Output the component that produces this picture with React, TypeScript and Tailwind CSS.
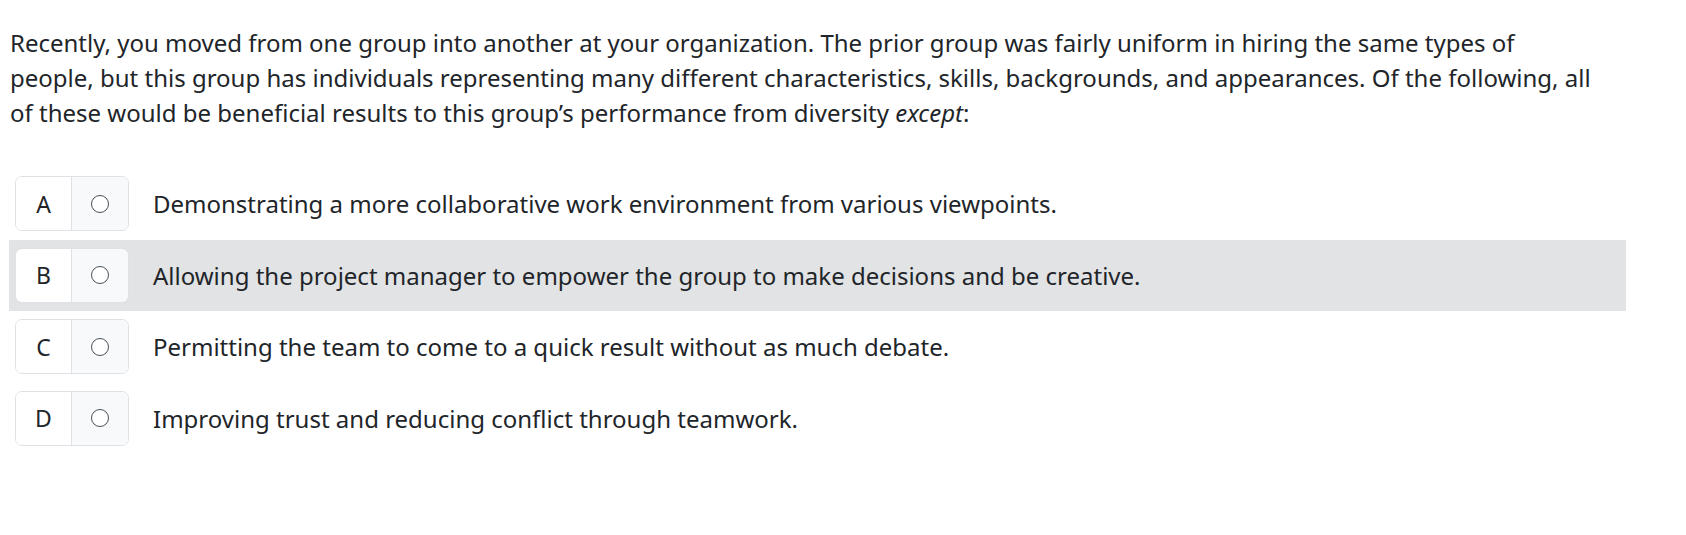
const OPTIONS = [
  { letter: 'A', text: 'Demonstrating a more collaborative work environment from various viewpoints.' },
  { letter: 'B', text: 'Allowing the project manager to empower the group to make decisions and be creative.' },
  { letter: 'C', text: 'Permitting the team to come to a quick result without as much debate.' },
  { letter: 'D', text: 'Improving trust and reducing conflict through teamwork.' },
]

export default function App() {
  const hovered = 'B'
  return (
    <div
      className="bg-white min-h-[535px] pl-[9px] pt-[25px] text-[#212529]"
      style={{ fontFamily: '"Noto Sans", "Open Sans", sans-serif' }}
    >
      <div className="w-[1617px]">
        <p className="w-[1592px] text-[24px] leading-[35px] pl-px">
          Recently, you moved from one group into another at your organization. The prior group was fairly uniform in hiring
          the same types of people, but this group has individuals representing many different characteristics, skills,
          backgrounds, and appearances. Of the following, all of these would be beneficial results to this group’s
          performance from diversity <em>except</em>:
        </p>

        <div className="mt-[38px]">
          {OPTIONS.map((o) => (
            <div
              key={o.letter}
              className={`flex items-center h-[71.5px] pl-[6px] ${o.letter === hovered ? 'bg-[#e2e3e5]' : ''}`}
            >
              <div className="flex h-[55px] w-[114px] shrink-0 rounded-[7px] border border-[#dee2e6] overflow-hidden">
                <div className="flex w-[56px] items-center justify-center bg-white text-[23px] border-r border-[#dee2e6]">
                  {o.letter}
                </div>
                <div className="flex flex-1 items-center justify-center bg-[#f8f9fa]">
                  <span className="block h-[18px] w-[18px] rounded-full border-[1.5px] border-[#495057] bg-white" />
                </div>
              </div>
              <span className="ml-[24px] text-[24px] leading-[35px]">{o.text}</span>
            </div>
          ))}
        </div>
      </div>
    </div>
  )
}
